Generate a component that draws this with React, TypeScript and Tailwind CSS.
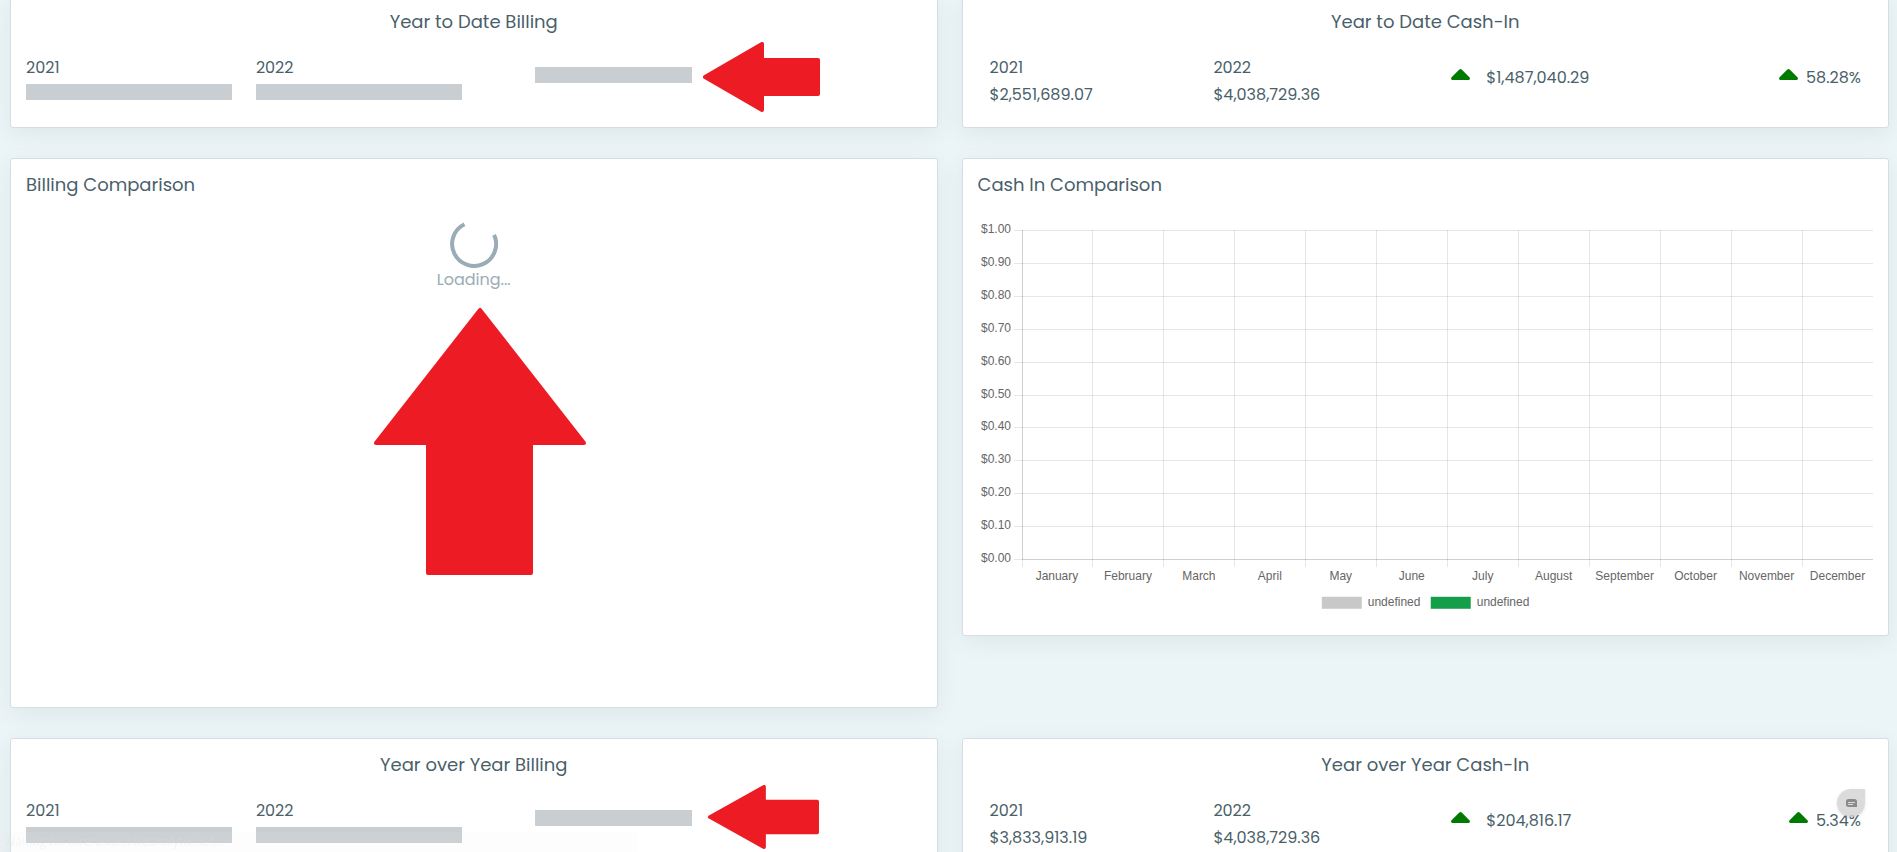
import type { ReactNode } from "react";

const months = [
  "January",
  "February",
  "March",
  "April",
  "May",
  "June",
  "July",
  "August",
  "September",
  "October",
  "November",
  "December",
];

const ticks = ["1.00", "0.90", "0.80", "0.70", "0.60", "0.50", "0.40", "0.30", "0.20", "0.10", "0.00"];

function Card({ title, center, className = "", children }: {
  title: string;
  center?: boolean;
  className?: string;
  children: ReactNode;
}) {
  return (
    <section
      className={`relative rounded-[3px] border border-[#d5dee2] bg-white px-[15px] pt-3 shadow-[0_6px_24px_rgba(4,9,20,0.06)] ${className}`}
    >
      <h2 className={center ? "text-center text-[18px] leading-7" : "text-[18px] leading-7"}>{title}</h2>
      {children}
    </section>
  );
}

function CaretUp() {
  return (
    <svg className="mb-2 shrink-0" width="19" height="11" viewBox="0 0 19 11" fill="#007a00">
      <path d="M8.3.6a1.8 1.8 0 0 1 2.4 0l7.7 7.6c1.1 1.1.4 2.8-1.1 2.8H1.7C.2 11-.5 9.3.6 8.2z" />
    </svg>
  );
}

// Left pointing marker used on the billing cards
function ArrowLeft({ className }: { className: string }) {
  return (
    <svg className={className} viewBox="0 0 117 70" preserveAspectRatio="none" fill="#ed1c24" stroke="#ed1c24" strokeWidth="4" strokeLinejoin="round">
      <path d="M2 35 59 2v16h56v34H59v16z" />
    </svg>
  );
}

function BillingSummary({ title, arrow }: { title: string; arrow: string }) {
  return (
    <Card title={title} center className="pb-[21px]">
      <div className="mt-[18px] grid grid-cols-4 gap-6">
        {["2021", "2022"].map((year) => (
          <div key={year} className="h-[52px]">
            <p className="leading-7">{year}</p>
            <div className="mt-[2px] h-4 bg-[#c9ced2]" />
          </div>
        ))}
        <div className="flex justify-end pt-[13px]">
          <div className="h-4 w-[157px] bg-[#c9ced2]" />
        </div>
      </div>
      <ArrowLeft className={arrow} />
    </Card>
  );
}

function CashSummary({ title, previous, current, change, percent }: {
  title: string;
  previous: string;
  current: string;
  change: string;
  percent: string;
}) {
  return (
    <Card title={title} center className="pb-[19px]">
      <div className="mt-[18px] grid grid-cols-4">
        <div className="px-3">
          <p className="leading-7">2021</p>
          <p className="leading-[26px]">{previous}</p>
        </div>
        <div className="px-3">
          <p className="leading-7">2022</p>
          <p className="leading-[26px]">{current}</p>
        </div>
        <div className="flex h-9 items-center gap-4 pt-3 pl-[26px]">
          <CaretUp />
          <span>{change}</span>
        </div>
        <div className="flex h-9 items-center justify-end gap-2 px-3 pt-3">
          <CaretUp />
          <span>{percent}</span>
        </div>
      </div>
    </Card>
  );
}

function CashChart() {
  const top = 11;
  const bottom = 340;
  const step = (bottom - top) / 10;

  return (
    <svg
      className="mt-5 block h-auto w-full font-['Liberation_Sans',Arial,sans-serif] text-[12px]"
      viewBox="0 0 896 402"
      fill="#666"
    >
      <g stroke="#000" strokeOpacity="0.1" shapeRendering="crispEdges">
        {ticks.map((tick, i) => (
          <line key={tick} x1="36" x2="896" y1={Math.round(top + i * step) + 0.2} y2={Math.round(top + i * step) + 0.2} />
        ))}
        {months.map((month, i) => (
          <line key={month} x1={i ? 43.7 + i * 71 : 44.7} x2={i ? 43.7 + i * 71 : 44.7} y1={top} y2={bottom + 8} />
        ))}
        <line x1="44.7" x2="44.7" y1={top} y2={bottom} />
        <line x1="44" x2="896" y1={bottom + 0.2} y2={bottom + 0.2} />
      </g>
      {ticks.map((tick, i) => (
        <text key={tick} x="33" y={Math.round(top + i * step) + 3} textAnchor="end">
          ${tick}
        </text>
      ))}
      {months.map((month, i) => (
        <text key={month} x={79 + i * 71} y="361" textAnchor="middle">
          {month}
        </text>
      ))}
      <rect x="344" y="378" width="40" height="12" fill="#c8c8c8" />
      <text x="390" y="387">undefined</text>
      <rect x="453" y="378" width="40" height="12" fill="#159e49" />
      <text x="499" y="387">undefined</text>
    </svg>
  );
}

export default function App() {
  return (
    <div className="h-screen overflow-hidden bg-[#ebf4f7] font-[Poppins,Inter,sans-serif] text-[16px] text-[#4a5f6a]">
      <main className="-mt-[5px] grid grid-cols-2 items-start gap-x-6 gap-y-[30px] pr-2 pl-[10px]">
        <BillingSummary title="Year to Date Billing" arrow="absolute top-[46px] left-[692px] h-[70px] w-[117px]" />
        <CashSummary
          title="Year to Date Cash-In"
          previous="$2,551,689.07"
          current="$4,038,729.36"
          change="$1,487,040.29"
          percent="58.28%"
        />

        <Card title="Billing Comparison" className="min-h-[550px]">
          <div className="mt-[21px] flex flex-col items-center text-[#9aacb6]" role="status">
            <svg width="48" height="48" viewBox="0 0 48 48" fill="none" stroke="#9aadb7" strokeWidth="4">
              <path d="M14.5 4.2A22 22 0 1 0 44.1 14.8" />
            </svg>
            <span className="leading-6">Loading...</span>
          </div>
          <svg
            className="absolute top-[149px] left-[363px] h-[267px] w-[212px]"
            viewBox="0 0 212 267"
            fill="#ed1c24"
            stroke="#ed1c24"
            strokeWidth="4"
            strokeLinejoin="round"
          >
            <path d="M106 2 2 135h52v130h103V135h53z" />
          </svg>
        </Card>
        <Card title="Cash In Comparison" className="pb-[14px]">
          <CashChart />
        </Card>

        <BillingSummary title="Year over Year Billing" arrow="absolute top-[46px] left-[697px] h-[64px] w-[111px]" />
        <CashSummary
          title="Year over Year Cash-In"
          previous="$3,833,913.19"
          current="$4,038,729.36"
          change="$204,816.17"
          percent="5.34%"
        />
      </main>

      <button
        type="button"
        aria-label="Open chat"
        className="fixed right-8 bottom-[35px] flex size-7 items-center justify-center rounded-full rounded-tr-[3px] bg-[#d2d2d2]/80 shadow-[0_1px_3px_rgba(0,0,0,0.12)]"
      >
        <svg width="11" height="8" viewBox="0 0 11 8">
          <path d="M2.500 0h6A2.500 2.500 0 0 1 11 2.500V8H2.500A2.500 2.500 0 0 1 0 5.500v-3A2.500 2.500 0 0 1 2.500 0z" fill="#8a8a8a" />
          <path d="M2 3.500h7M2 5.500h5" stroke="#dcdcdc" />
        </svg>
      </button>

      {/* Browser status line, almost faded out */}
      <div className="fixed bottom-0 left-0 h-5 w-[637px] bg-[#f0f0f0]/10 pl-1 font-['Open_Sans',sans-serif] text-[12px] leading-5 text-[#e0e0e0]/30">
        Waiting for hirenexus.hireanalytix.net...
      </div>
    </div>
  );
}
